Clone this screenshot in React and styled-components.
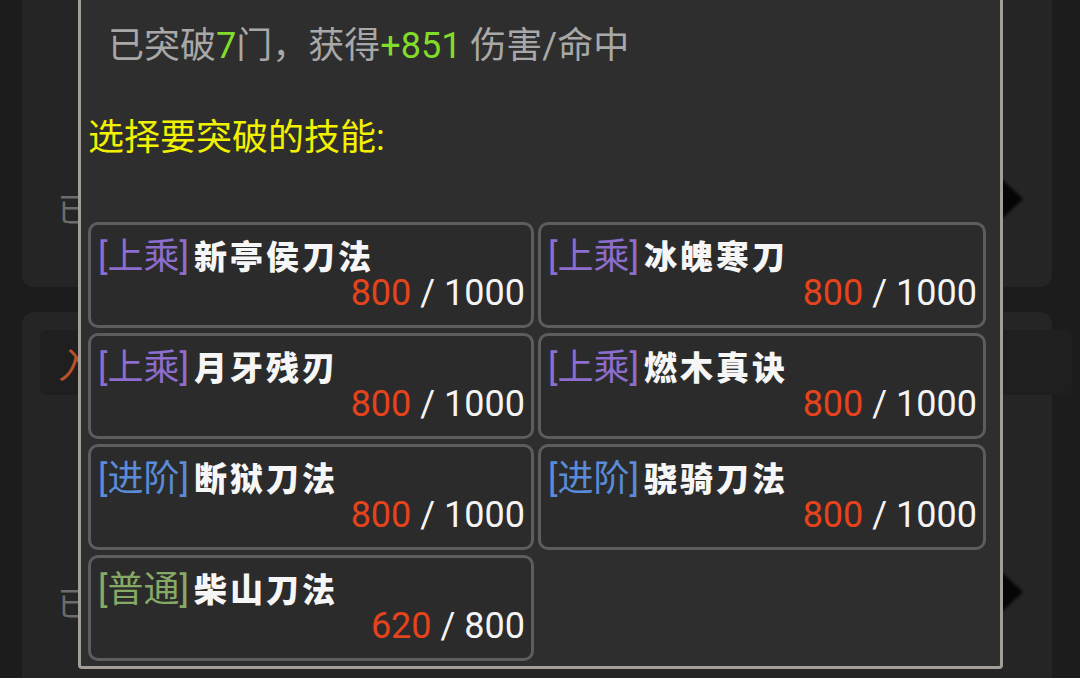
import React from 'react';
import styled, {createGlobalStyle} from 'styled-components';

const GlobalStyle = createGlobalStyle`
  html, body {
    margin: 0;
    padding: 0;
    background: #1c1c1c;
    overflow: hidden;
  }
  body {
    font-family: Roboto, 'Noto Sans CJK SC', sans-serif;
  }
`;

const Page = styled.div`
  position: relative;
  width: 1080px;
  height: 678px;
  overflow: hidden;
  display: flex;
  flex-direction: column;
  gap: 25px;
  padding: 0 28px 0 22px;
  box-sizing: border-box;
`;

const Panel = styled.div`
  flex: none;
  height: ${props => props.$height}px;
  margin-top: ${props => props.$offset || 0}px;
  background: #252525;
  border-radius: 12px;
  box-sizing: border-box;
  display: flex;
  flex-direction: column;
`;

const PanelHeader = styled.div`
  height: 65px;
  margin: 18px -20px 0 18px;
  background: #1f1f1f;
  border-radius: 6px;
  display: flex;
  align-items: center;
  padding-left: 18px;
  color: #b9512b;
  font-size: 36px;
`;

const PanelRow = styled.div`
  display: flex;
  align-items: center;
  justify-content: space-between;
  padding: 0 27px 0 36px;
  margin-top: ${props => props.$top}px;
  color: #6c6c6c;
  font-size: 32px;
`;

const Chevron = styled.svg`
  width: 48px;
  height: 60px;
  margin-top: ${props => props.$shift || 0}px;
  filter: blur(1.5px);
`;

const Modal = styled.div`
  position: absolute;
  left: 78px;
  top: -3px;
  width: 925px;
  height: 672px;
  box-sizing: border-box;
  background: #2e2e2e;
  border: 3px solid #a39f96;
  border-radius: 0 0 4px 4px;
  padding: 24px 14px 0 7px;
  display: flex;
  flex-direction: column;
`;

const Summary = styled.div`
  margin-left: 20px;
  font-size: 36px;
  line-height: 44px;
  color: #a8a8a8;
`;

const Green = styled.span`
  color: #82dc2a;
`;

const Prompt = styled.div`
  margin-top: 48px;
  font-size: 36px;
  line-height: 44px;
  color: #f2f200;
`;

const Grid = styled.div`
  margin-top: 62px;
  display: grid;
  grid-template-columns: 446px 448px;
  grid-auto-rows: 106px;
  column-gap: 4px;
  row-gap: 5px;
`;

const Card = styled.div`
  box-sizing: border-box;
  border: 3px solid #5d5d5d;
  border-radius: 10px;
  background: #2b2b2b;
  padding: 11px 6px 0 7px;
  display: flex;
  flex-direction: column;
`;

const Label = styled.div`
  height: 38px;
  font-size: 36px;
  line-height: 38px;
  white-space: nowrap;
`;

const Tier = styled.span`
  display: inline-block;
  color: ${props => props.$color};
`;

const Name = styled.span`
  display: inline-block;
  margin-left: 5px;
  color: #f6f6f6;
  font-family: 'Noto Sans CJK SC', sans-serif;
  font-weight: 900;
  font-size: 33px;
  letter-spacing: 3px;
`;

const Progress = styled.div`
  height: 38px;
  text-align: right;
  font-size: 36px;
  line-height: 38px;
  color: #f4f4f4;
`;

const Current = styled.span`
  color: #e5431b;
`;

const tierColors = {
  上乘: '#8d6dcd',
  进阶: '#5a8bd8',
  普通: '#86a965',
};

const skills = [
  {tier: '上乘', name: '新亭侯刀法', cur: 800, max: 1000},
  {tier: '上乘', name: '冰魄寒刀', cur: 800, max: 1000},
  {tier: '上乘', name: '月牙残刃', cur: 800, max: 1000},
  {tier: '上乘', name: '燃木真诀', cur: 800, max: 1000},
  {tier: '进阶', name: '断狱刀法', cur: 800, max: 1000},
  {tier: '进阶', name: '骁骑刀法', cur: 800, max: 1000},
  {tier: '普通', name: '柴山刀法', cur: 620, max: 800},
];

// right-pointing arrow at the end of each list row
function Arrow({shift}) {
  return (
    <Chevron $shift={shift} viewBox='0 0 48 60'>
      <path d='M16 2 L46 30 L16 58 Z' fill='#050505' />
    </Chevron>
  );
}

function SkillCard({skill}) {
  return (
    <Card>
      <Label>
        <Tier $color={tierColors[skill.tier]}>[{skill.tier}]</Tier>
        <Name>{skill.name}</Name>
      </Label>
      <Progress>
        <Current>{skill.cur}</Current> / {skill.max}
      </Progress>
    </Card>
  );
}

function App() {
  return (
    <>
      <GlobalStyle />
      <Page>
        <Panel $height={307} $offset={-20}>
          <PanelRow $top={204}>
            <span>已</span>
            <Arrow shift={-17} />
          </PanelRow>
        </Panel>
        <Panel $height={420}>
          <PanelHeader>入</PanelHeader>
          <PanelRow $top={183}>
            <span>已</span>
            <Arrow shift={-18} />
          </PanelRow>
        </Panel>
        <Modal>
          <Summary>
            已突破<Green>7</Green>门，获得<Green>+851</Green> 伤害/命中
          </Summary>
          <Prompt>选择要突破的技能:</Prompt>
          <Grid>
            {skills.map(skill => (
              <SkillCard key={skill.name} skill={skill} />
            ))}
          </Grid>
        </Modal>
      </Page>
    </>
  );
}

export default App;
